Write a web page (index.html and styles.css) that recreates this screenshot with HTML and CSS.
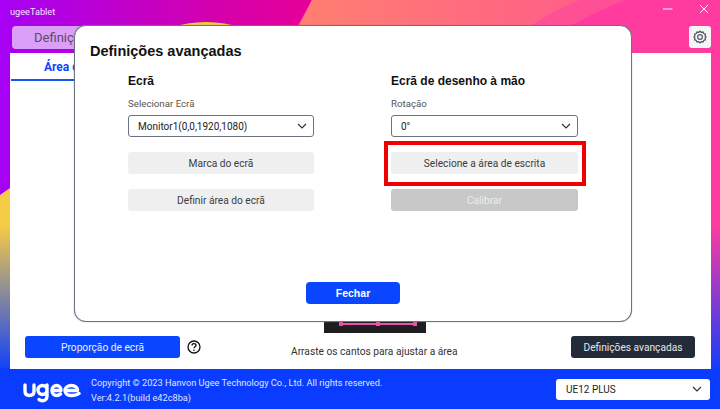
FILE: index.html
```html
<!DOCTYPE html>
<html lang="pt">
<head>
  <meta charset="UTF-8">
  <title>ugeeTablet</title>
  <link rel="stylesheet" href="styles.css">
</head>
<body>
  <div class="app">
    <svg class="backdrop" width="720" height="409" viewBox="0 0 720 409">
      <defs>
        <linearGradient id="topBg" x1="0" y1="0" x2="1" y2="0">
          <stop offset="0" stop-color="#a600f5"/>
          <stop offset="0.3" stop-color="#d400ac"/>
          <stop offset="0.42" stop-color="#e5009a"/>
        </linearGradient>
        <linearGradient id="coral" x1="0" y1="0" x2="1" y2="0">
          <stop offset="0" stop-color="#ff8070"/>
          <stop offset="1" stop-color="#ff5f88"/>
        </linearGradient>
        <linearGradient id="fade" x1="0" y1="0" x2="0" y2="1">
          <stop offset="0" stop-color="#0a3cff" stop-opacity="0"/>
          <stop offset="1" stop-color="#0a3cff"/>
        </linearGradient>
      </defs>
      <rect width="720" height="409" fill="url(#topBg)"/>
      <path d="M312 0H720V409H100Z" fill="#ff3ba0"/>
      <path d="M312 0H625C600 10 575 22 548 40H290Z" fill="#ff4f95"/>
      <path d="M312 0H580C560 8 545 16 525 30H297Z" fill="url(#coral)"/>
      <ellipse cx="206" cy="42" rx="48" ry="20" fill="#f6cb45"/>
      <path d="M0 195L10 188H300V409H0Z" fill="#f6cb45"/>
      <rect y="225" width="720" height="150" fill="url(#fade)"/>
      <rect y="368" width="720" height="41" fill="#0a3cff"/>
    </svg>

    <header class="titlebar">
      <span class="app-name">ugeeTablet</span>
      <div class="window-btns">
        <svg width="10" height="10" viewBox="0 0 10 10"><path d="M0 5H9.500" stroke="#fff" stroke-width="1"/></svg>
        <svg width="10" height="10" viewBox="0 0 10 10"><path d="M1 1L9 9M9 1L1 9" stroke="#fff" stroke-width="1"/></svg>
      </div>
    </header>

    <div class="tabs">
      <div class="tab">Definições da caneta</div>
      <button class="gear-btn">
        <svg width="14" height="14" viewBox="0 0 14 14" fill="none" stroke="#555a60">
          <path d="M7 1.200L8.300 2.300 10 2 10.800 3.500 12.400 4.200 12.100 5.900 13 7 12.100 8.100 12.400 9.800 10.800 10.500 10 12 8.300 11.700 7 12.800 5.700 11.700 4 12 3.200 10.500 1.600 9.800 1.900 8.100 1 7 1.900 5.900 1.600 4.200 3.200 3.500 4 2 5.700 2.300Z" stroke-width="1.300"/>
          <circle cx="7" cy="7" r="2.400" stroke-width="1.200"/>
        </svg>
      </button>
    </div>

    <main class="panel">
      <nav class="subtabs">
        <div class="subtab">Área de trabalho</div>
      </nav>
      <div class="preview-wrap">
        <div class="preview">
          <span class="handle-line"><i></i><i></i><i></i></span>
        </div>
      </div>
      <div class="panel-actions">
        <div class="ratio-group">
          <button class="btn btn-blue ratio-btn">Proporção de ecrã</button>
          <svg width="14" height="14" viewBox="0 0 14 14" fill="none">
            <circle cx="7" cy="7" r="6" stroke="#111" stroke-width="1.300"/>
            <path d="M5 5.500C5 4.300 5.900 3.700 7 3.700S9 4.400 9 5.400C9 6.700 7 6.800 7 8.300" stroke="#111" stroke-width="1.300"/>
            <circle cx="7" cy="10.200" r="0.800" fill="#111"/>
          </svg>
        </div>
        <span class="drag-hint">Arraste os cantos para ajustar a área</span>
        <button class="btn btn-dark adv-btn">Definições avançadas</button>
      </div>
    </main>

    <footer class="footer">
      <svg class="logo" width="58" height="22" viewBox="0 0 58 22" fill="none" stroke="#fff" stroke-width="3.400" stroke-linecap="round" stroke-linejoin="round">
        <path d="M2 4V10C2 13 4 14.500 6.500 14.500S11 13 11 10V4"/>
        <path d="M24 9C24 11.500 22 13.500 19.500 13.500S15 11.500 15 9 17 4.500 19.500 4.500 24 6.500 24 9ZM24 4V15C24 18 22 19.800 19.500 19.800 18 19.800 16.800 19.300 16 18.500"/>
        <path d="M29 9.500H38C38 6.500 36 4.500 33.500 4.500S29 6.500 29 9.500C29 12.500 31 14.500 33.500 14.500 35 14.500 36.500 14 37.500 13"/>
        <path d="M42 9.500H54.500C54.500 6.500 52 4.500 48.500 4.500S42 6.500 42 9.500C42 12.500 44.500 14.500 48 14.500 51 14.500 54 14 56 12.500"/>
      </svg>
      <div class="legal">
        <p>Copyright © 2023 Hanvon Ugee Technology Co., Ltd. All rights reserved.</p>
        <p>Ver:4.2.1(build e42c8ba)</p>
      </div>
      <div class="select device-select">
        <span>UE12 PLUS</span>
        <svg class="chev" width="10" height="6" viewBox="0 0 10 6"><path d="M1 1L5 5 9 1" fill="none" stroke="#333" stroke-width="1.200"/></svg>
      </div>
    </footer>

    <section class="modal">
      <h1 class="modal-title">Definições avançadas</h1>
      <div class="modal-cols">
        <div class="col">
          <h2>Ecrã</h2>
          <label>Selecionar Ecrã</label>
          <div class="select">
            <span>Monitor1(0,0,1920,1080)</span>
            <svg class="chev" width="10" height="6" viewBox="0 0 10 6"><path d="M1 1L5 5 9 1" fill="none" stroke="#333" stroke-width="1.200"/></svg>
          </div>
          <button class="btn btn-grey">Marca do ecrã</button>
          <button class="btn btn-grey">Definir área do ecrã</button>
        </div>
        <div class="col">
          <h2>Ecrã de desenho à mão</h2>
          <label>Rotação</label>
          <div class="select">
            <span>0°</span>
            <svg class="chev" width="10" height="6" viewBox="0 0 10 6"><path d="M1 1L5 5 9 1" fill="none" stroke="#333" stroke-width="1.200"/></svg>
          </div>
          <button class="btn btn-grey highlighted">Selecione a área de escrita</button>
          <button class="btn btn-off">Calibrar</button>
        </div>
      </div>
      <button class="btn btn-blue close-btn">Fechar</button>
    </section>
  </div>
</body>
</html>
```

FILE: styles.css
```css
* {
  box-sizing: border-box;
}
body {
  margin: 0;
  font-family: Roboto, Arial, sans-serif;
}
.app {
  position: relative;
  width: 720px;
  height: 409px;
  display: flex;
  flex-direction: column;
  overflow: hidden;
}
.backdrop {
  position: absolute;
  left: 0;
  top: 0;
}
.titlebar, .tabs, .panel, .footer {
  position: relative;
}
.titlebar {
  height: 26px;
  padding: 4px 11px 0 10px;
  display: flex;
  justify-content: space-between;
  align-items: flex-start;
}
.app-name {
  margin-top: 1px;
  font-size: 9.200px;
  line-height: 14px;
  color: #f4e4ff;
}
.window-btns {
  display: flex;
  gap: 26px;
}
.tabs {
  height: 27px;
  padding: 0 9px 0 12px;
  display: flex;
  justify-content: space-between;
  align-items: flex-start;
}
.tab {
  width: 320px;
  height: 23px;
  background: #dc9ff8;
  border-radius: 4px;
  font-size: 13px;
  line-height: 23px;
  padding-left: 22px;
  color: #5b4a6a;
}
.gear-btn {
  width: 22px;
  height: 22px;
  padding: 0;
  border: none;
  border-radius: 3px;
  background: #f4f5f7;
  display: flex;
  align-items: center;
  justify-content: center;
}
.panel {
  margin: 0 9px 0 10px;
  height: 316px;
  background: #fff;
  display: flex;
  flex-direction: column;
}
.subtabs {
  height: 28px;
  display: flex;
}
.subtab {
  width: 140px;
  height: 28px;
  margin-left: 1px;
  border-bottom: 2px solid #1554f0;
  padding-left: 33px;
  font-size: 12px;
  font-weight: 700;
  line-height: 29px;
  color: #0a46ff;
}
.preview-wrap {
  flex: 1;
  display: flex;
  align-items: flex-end;
  padding-left: 314px;
}
.preview {
  width: 102px;
  height: 100px;
  background: #1e1e20;
  display: flex;
  align-items: flex-end;
  padding: 0 9px 8px 15px;
}
.handle-line {
  flex: 1;
  height: 2px;
  background: #f04fa8;
  display: flex;
  justify-content: space-between;
  align-items: center;
}
.handle-line i {
  width: 4px;
  height: 4px;
  background: #f04fa8;
}
.panel-actions {
  height: 33px;
  margin-top: 3px;
  padding: 0 16px 0 15px;
  display: grid;
  grid-template-columns: 266px auto 1fr;
  align-items: start;
}
.ratio-group {
  display: flex;
  align-items: center;
  gap: 7px;
}
.btn {
  height: 22px;
  padding: 0;
  border: none;
  border-radius: 3px;
  font-family: Roboto, Arial, sans-serif;
  font-size: 10.200px;
}
.btn-blue {
  background: #0a46ff;
  color: #e8eeff;
}
.btn-dark {
  background: #242b38;
  color: #e4e6ea;
}
.btn-grey {
  background: #efefef;
  color: #3c3c3c;
}
.btn-off {
  background: #c8c8c8;
  color: #ececec;
}
.ratio-btn {
  width: 155px;
}
.adv-btn {
  width: 124px;
  justify-self: end;
}
.drag-hint {
  font-size: 10.200px;
  line-height: 14px;
  margin-top: 9px;
  color: #333;
}
.footer {
  flex: 1;
  padding: 0 10px 0 23px;
  display: flex;
  align-items: center;
}
.logo {
  flex-shrink: 0;
  margin-top: 6px;
}
.legal {
  margin: 2px 0 0 10px;
  font-size: 9.200px;
  line-height: 15px;
  color: #dfe6ff;
}
.legal p {
  margin: 0;
}
.select {
  height: 22px;
  border: 1px solid #6b7280;
  border-radius: 3px;
  background: #fff;
  padding: 0 6px 0 9px;
  display: flex;
  align-items: center;
  justify-content: space-between;
  font-size: 10px;
  color: #222;
}
.device-select {
  width: 154px;
  height: 21px;
  margin-left: auto;
  border: none;
  padding: 0 8px 0 10px;
}
.modal {
  position: absolute;
  left: 74px;
  top: 25px;
  width: 558px;
  height: 297px;
  background: #fff;
  border: 1px solid #6b7280;
  box-shadow: 0 0 1px #6b7280;
  border-radius: 12px;
  padding: 16px 15px 0;
  display: flex;
  flex-direction: column;
}
.modal-title {
  margin: 0;
  font-family: "Liberation Sans", Arial, sans-serif;
  font-size: 14.500px;
  line-height: 18px;
  color: #111;
}
.modal-cols {
  display: grid;
  grid-template-columns: 186px 187px;
  column-gap: 77px;
  padding-left: 38px;
  margin-top: 13px;
}
.col {
  display: flex;
  flex-direction: column;
}
.col h2 {
  margin: 0;
  font-family: "Liberation Sans", Arial, sans-serif;
  font-size: 12px;
  line-height: 16px;
  color: #111;
}
.col label {
  margin-top: 8px;
  font-size: 9.700px;
  line-height: 14px;
  color: #555;
}
.col .select {
  margin-top: 4px;
  margin-bottom: 15px;
}
.col .btn + .btn {
  margin-top: 15px;
}
.highlighted {
  position: relative;
}
.highlighted::after {
  content: "";
  position: absolute;
  inset: -11px -8px -12px -7px;
  border: 4px solid #f00000;
}
.close-btn {
  width: 94px;
  margin: auto auto 17px;
  font-family: "Liberation Sans", Arial, sans-serif;
  font-size: 10.500px;
  font-weight: 700;
  color: #fff;
  border-radius: 4px;
}
```
